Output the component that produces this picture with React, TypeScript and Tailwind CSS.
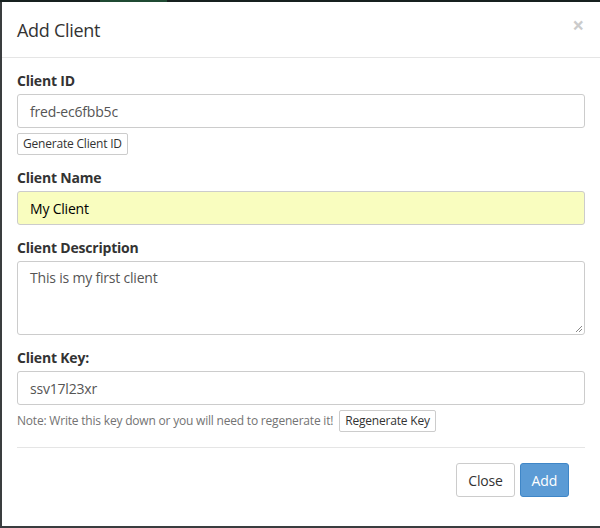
import React from 'react';

const font = { fontFamily: '"Open Sans", "Liberation Sans", sans-serif' };

function Label({ children }: { children: React.ReactNode }) {
  return <label className="block text-[14px] font-bold leading-[20px] text-[#333] mb-[3px]">{children}</label>;
}

export default function App() {
  return (
    <div className="w-[600px] h-[528px] bg-[#3a3d3f] overflow-hidden tracking-[-0.2px]" style={font}>
      {/* backdrop strip with page behind */}
      <div className="h-[2px] bg-[#16201f] flex">
        <div className="w-[100px]" />
        <div className="w-[67px] bg-[#1f4a33]" />
      </div>
      <div className="ml-[2px] h-[524px] bg-white flex flex-col">
        {/* Header */}
        <div className="h-[56px] px-[15px] flex items-center justify-between border-b border-[#e5e5e5]">
          <h4 className="text-[18px] leading-[26px] text-[#333] tracking-[-0.3px]">Add Client</h4>
          <span className="text-[21px] font-bold leading-none text-black opacity-20 mr-[1px] -mt-[8px]">×</span>
        </div>

        {/* Body */}
        <div className="px-[15px] pt-[13px]">
          <Label>Client ID</Label>
          <div className="h-[34px] border border-[#ccc] rounded-[3px] px-[12px] flex items-center text-[14px] text-[#555]">
            fred-ec6fbb5c
          </div>
          <button className="mt-[5px] h-[22px] px-[5px] border border-[#ccc] rounded-[2px] bg-white text-[12px] text-[#333] leading-none">
            Generate Client ID
          </button>

          <div className="mt-[13px]">
            <Label>Client Name</Label>
            <div className="h-[34px] border border-[#ccc] rounded-[3px] px-[12px] flex items-center text-[14px] text-black bg-[#f9fdbf]">
              My Client
            </div>
          </div>

          <div className="mt-[13px]">
            <Label>Client Description</Label>
            <div className="relative h-[74px] border border-[#ccc] rounded-[3px] px-[12px] pt-[6px] text-[14px] leading-[20px] text-[#555]">
              This is my first client
              <svg className="absolute right-[1px] bottom-[1px]" width="8" height="8" viewBox="0 0 8 8">
                <path d="M7 1 L1 7 M7 4 L4 7" stroke="#888" strokeWidth="1" />
              </svg>
            </div>
          </div>

          <div className="mt-[13px]">
            <Label>Client Key:</Label>
            <div className="h-[34px] border border-[#ccc] rounded-[3px] px-[12px] flex items-center text-[14px] text-[#555]">
              ssv17l23xr
            </div>
            <div className="mt-[5px] flex items-center gap-[6px]">
              <span className="text-[12px] text-[#737373]">Note: Write this key down or you will need to regenerate it!</span>
              <button className="h-[22px] px-[5px] border border-[#ccc] rounded-[2px] bg-white text-[12px] text-[#333] leading-none">
                Regenerate Key
              </button>
            </div>
          </div>

          <div className="mt-[15px] border-t border-[#e5e5e5]" />
        </div>

        {/* Footer */}
        <div className="px-[15px] pt-[15px] flex justify-end gap-[5px] mr-[16px]">
          <button className="h-[34px] px-[11px] border border-[#ccc] rounded-[3px] bg-white text-[14px] text-[#333]">
            Close
          </button>
          <button className="h-[34px] px-[11px] border border-[#3f86c7] rounded-[3px] bg-[#5b9bd5] text-[14px] text-white">
            Add
          </button>
        </div>
      </div>
    </div>
  );
}
